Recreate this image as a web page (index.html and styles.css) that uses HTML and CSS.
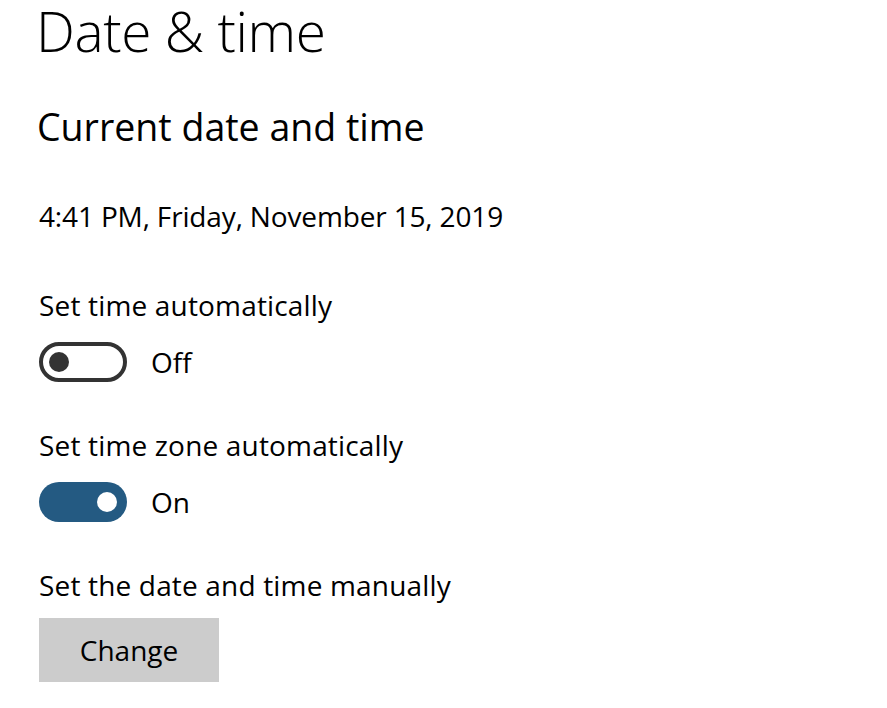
FILE: index.html
```html
<!DOCTYPE html>
<html lang="en">
<head>
<meta charset="utf-8">
<title>Date &amp; time</title>
<link rel="stylesheet" href="styles.css">
</head>
<body>
<main class="page">
  <h1 class="title">Date &amp; time</h1>
  <h2 class="subtitle">Current date and time</h2>
  <p class="now">4:41 PM, Friday, November 15, 2019</p>

  <section class="setting">
    <div class="label">Set time automatically</div>
    <div class="toggle-row">
      <span class="toggle toggle-off"><span class="knob"></span></span>
      <span class="state">Off</span>
    </div>
  </section>

  <section class="setting">
    <div class="label">Set time zone automatically</div>
    <div class="toggle-row">
      <span class="toggle toggle-on"><span class="knob"></span></span>
      <span class="state">On</span>
    </div>
  </section>

  <section class="setting">
    <div class="label">Set the date and time manually</div>
    <button class="btn" type="button">Change</button>
  </section>
</main>
</body>
</html>
```

FILE: styles.css
```css
html, body {
  margin: 0;
  padding: 0;
  background: #ffffff;
}

body {
  font-family: "Open Sans", "Noto Sans", sans-serif;
  color: #000000;
}

.page {
  padding: 0 0 0 36px;
}

.title {
  margin: 0;
  font-size: 55px;
  font-weight: 300;
  line-height: 62px;
  letter-spacing: -0.4px;
}

.subtitle {
  margin: 41px 0 0 1px;
  font-size: 37.5px;
  font-weight: 400;
  line-height: 48px;
}

.now {
  margin: 47px 0 0 3px;
  font-size: 28px;
  line-height: 36px;
  letter-spacing: -0.15px;
}

.setting {
  margin: 53px 0 0 3px;
}

.setting + .setting {
  margin-top: 45px;
}

.label {
  font-size: 28px;
  line-height: 36px;
  letter-spacing: 0.17px;
}

.toggle-row {
  display: flex;
  align-items: center;
  gap: 24px;
  margin-top: 19px;
  height: 40px;
}

.toggle {
  box-sizing: border-box;
  width: 88px;
  height: 40px;
  border-radius: 20px;
  display: flex;
  align-items: center;
}

.toggle-off {
  border: 4px solid #333333;
  background: #ffffff;
  justify-content: flex-start;
  padding: 0 6px;
}

.toggle-on {
  background: #245a82;
  justify-content: flex-end;
  padding: 0 10px;
}

.knob {
  width: 20px;
  height: 20px;
  border-radius: 50%;
}

.toggle-off .knob {
  background: #333333;
}

.toggle-on .knob {
  background: #ffffff;
}

.state {
  font-size: 28px;
  line-height: 36px;
}

.btn {
  display: block;
  margin-top: 15px;
  width: 180px;
  height: 64px;
  border: none;
  background: #cccccc;
  font-family: "Open Sans", "Noto Sans", sans-serif;
  font-size: 28px;
  color: #000000;
  padding: 0;
}
```
